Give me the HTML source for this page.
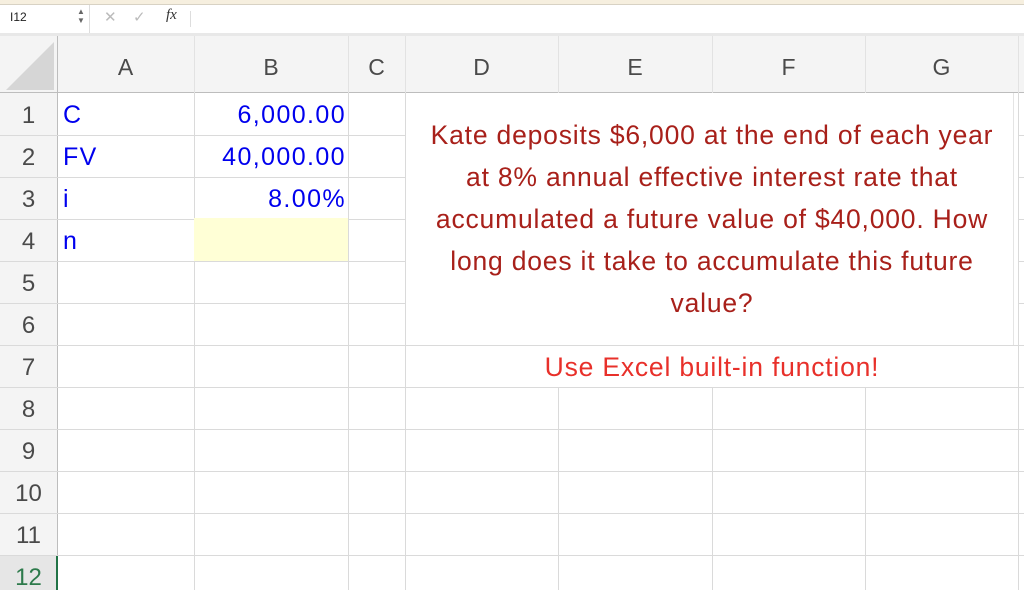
<!DOCTYPE html>
<html><head><style>
*{margin:0;padding:0;box-sizing:border-box}
body{width:1024px;height:590px;overflow:hidden;background:#fff;font-family:"Liberation Sans",sans-serif;position:relative}
.a{position:absolute}
.hl{position:absolute;height:1px;background:#dadada}
.vl{position:absolute;width:1px;background:#dadada}
.ch{position:absolute;top:36px;height:57px;line-height:62px;text-align:center;font-size:23px;color:#4a4a4a}
.rn{position:absolute;left:0;width:57px;text-align:center;font-size:24px;color:#4a4a4a;height:42px;line-height:46px}
.cell{position:absolute;font-size:25px;letter-spacing:1.4px;color:#0000ee;height:42px;line-height:44px}
.t{position:absolute;left:406px;width:612px;text-align:center;font-size:26.5px;letter-spacing:0.8px;color:#a8201a;line-height:42px;white-space:nowrap}
</style></head><body>
<div class="a" style="left:0;top:0;width:1024px;height:4px;background:#f6efdf"></div>
<div class="a" style="left:0;top:4px;width:1024px;height:1px;background:#d8d2c4"></div>
<div class="a" style="left:0;top:5px;width:1024px;height:29px;background:#fff"></div>
<div class="a" style="left:0;top:33px;width:1024px;height:3px;background:#e8e8e8"></div>
<div class="a" style="left:89px;top:5px;width:1px;height:28px;background:#ddd"></div>
<div class="a" style="left:10px;top:10px;font-size:12px;color:#222">I12</div>
<div class="a" style="left:77px;top:7px;font-size:8px;color:#666;line-height:9px">▲<br>▼</div>
<div class="a" style="left:104px;top:8px;font-size:15px;color:#bbb">✕</div>
<div class="a" style="left:133px;top:8px;font-size:15px;color:#bbb">✓</div>
<div class="a" style="left:166px;top:7px;font-size:15px;color:#333;font-family:'Liberation Serif',serif;font-style:italic">fx</div>
<div class="a" style="left:190px;top:11px;width:1px;height:16px;background:#ddd"></div>
<div class="a" style="left:0;top:36px;width:1024px;height:57px;background:#f4f4f4"></div>
<div class="a" style="left:0;top:93px;width:57px;height:497px;background:#f4f4f4"></div>
<svg class="a" style="left:4px;top:40px" width="52" height="52"><polygon points="50,2 50,50 2,50" fill="#d6d6d6"/></svg>
<div class="a" style="left:0;top:92px;width:1024px;height:1px;background:#bdbdbd"></div>
<div class="a" style="left:57px;top:36px;width:1px;height:554px;background:#bdbdbd"></div>
<div class="vl" style="left:194px;top:36px;height:57px;background:#e2e2e2"></div>
<div class="vl" style="left:348px;top:36px;height:57px;background:#e2e2e2"></div>
<div class="vl" style="left:405px;top:36px;height:57px;background:#e2e2e2"></div>
<div class="vl" style="left:558px;top:36px;height:57px;background:#e2e2e2"></div>
<div class="vl" style="left:712px;top:36px;height:57px;background:#e2e2e2"></div>
<div class="vl" style="left:865px;top:36px;height:57px;background:#e2e2e2"></div>
<div class="vl" style="left:1018px;top:36px;height:57px;background:#e2e2e2"></div>
<div class="ch" style="left:57px;width:137px">A</div>
<div class="ch" style="left:194px;width:154px">B</div>
<div class="ch" style="left:348px;width:57px">C</div>
<div class="ch" style="left:405px;width:153px">D</div>
<div class="ch" style="left:558px;width:154px">E</div>
<div class="ch" style="left:712px;width:153px">F</div>
<div class="ch" style="left:865px;width:153px">G</div>
<div class="hl" style="left:0;top:135px;width:1024px"></div>
<div class="hl" style="left:0;top:177px;width:1024px"></div>
<div class="hl" style="left:0;top:219px;width:1024px"></div>
<div class="hl" style="left:0;top:261px;width:1024px"></div>
<div class="hl" style="left:0;top:303px;width:1024px"></div>
<div class="hl" style="left:0;top:345px;width:1024px"></div>
<div class="hl" style="left:0;top:387px;width:1024px"></div>
<div class="hl" style="left:0;top:429px;width:1024px"></div>
<div class="hl" style="left:0;top:471px;width:1024px"></div>
<div class="hl" style="left:0;top:513px;width:1024px"></div>
<div class="hl" style="left:0;top:555px;width:1024px"></div>
<div class="vl" style="left:194px;top:93px;height:497px"></div>
<div class="vl" style="left:348px;top:93px;height:497px"></div>
<div class="vl" style="left:405px;top:93px;height:497px"></div>
<div class="vl" style="left:558px;top:387px;height:203px"></div>
<div class="vl" style="left:712px;top:387px;height:203px"></div>
<div class="vl" style="left:865px;top:387px;height:203px"></div>
<div class="vl" style="left:1018px;top:93px;height:497px"></div>
<div class="a" style="left:406px;top:93px;width:612px;height:252px;background:#fff"></div>
<div class="a" style="left:406px;top:346px;width:612px;height:41px;background:#fff"></div>
<div class="a" style="left:1013px;top:93px;width:1px;height:252px;background:#e4e4e4"></div>
<div class="t" style="top:114px">Kate deposits $6,000 at the end of each year<br>at 8% annual effective interest rate that<br>accumulated a future value of $40,000. How<br>long does it take to accumulate this future<br>value?</div>
<div class="t" style="top:346px;color:#e8302a">Use Excel built-in function!</div>
<div class="rn" style="top:93px">1</div>
<div class="rn" style="top:135px">2</div>
<div class="rn" style="top:177px">3</div>
<div class="rn" style="top:219px">4</div>
<div class="rn" style="top:261px">5</div>
<div class="rn" style="top:303px">6</div>
<div class="rn" style="top:345px">7</div>
<div class="rn" style="top:387px">8</div>
<div class="rn" style="top:429px">9</div>
<div class="rn" style="top:471px">10</div>
<div class="rn" style="top:513px">11</div>
<div class="a" style="left:0;top:556px;width:57px;height:34px;background:#e6e6e6"></div>
<div class="rn" style="top:555px;color:#2d7a4b">12</div>
<div class="a" style="left:56px;top:556px;width:2px;height:34px;background:#217346"></div>
<div class="cell" style="left:63px;top:93px">C</div>
<div class="cell" style="left:63px;top:135px">FV</div>
<div class="cell" style="left:63px;top:177px">i</div>
<div class="cell" style="left:63px;top:219px">n</div>
<div class="cell" style="left:194px;width:152px;text-align:right;top:93px">6,000.00</div>
<div class="cell" style="left:194px;width:152px;text-align:right;top:135px">40,000.00</div>
<div class="cell" style="left:194px;width:152px;text-align:right;top:177px">8.00%</div>
<div class="a" style="left:194px;top:218px;width:154px;height:43px;background:#ffffd6"></div>
</body></html>
